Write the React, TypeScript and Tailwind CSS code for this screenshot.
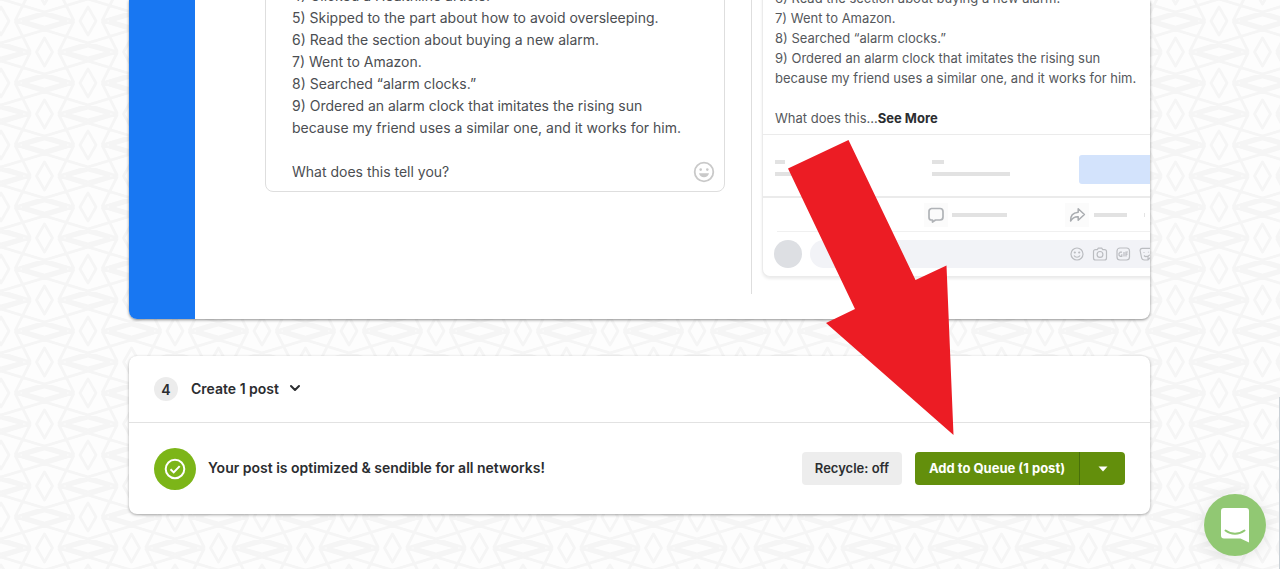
import { ChevronDown } from "lucide-react";

const POST_TEXT = [
  "4) Clicked a Healthline article.",
  "5) Skipped to the part about how to avoid oversleeping.",
  "6) Read the section about buying a new alarm.",
  "7) Went to Amazon.",
  "8) Searched “alarm clocks.”",
  "9) Ordered an alarm clock that imitates the rising sun",
  "because my friend uses a similar one, and it works for him.",
  "",
  "What does this tell you?",
].join("\n");

const PREVIEW_LINES = [
  "6) Read the section about buying a new alarm.",
  "7) Went to Amazon.",
  "8) Searched “alarm clocks.”",
  "9) Ordered an alarm clock that imitates the rising sun",
  "because my friend uses a similar one, and it works for him.",
];

// Lattice ornament: diamonds on a staggered 87 x 62 grid joined by long diagonals.
function latticePath() {
  const parts: string[] = [];
  for (let row = -2; row <= 4; row++) {
    for (let col = -2; col <= 3; col++) {
      const x = col * 87 + (row % 2 === 0 ? 0 : 43.5);
      const y = row * 31;
      parts.push(`M${x - 8} ${y}L${x} ${y - 14}L${x + 8} ${y}L${x} ${y + 14}Z`);
      const w = x + 43.5;
      parts.push(`M${w - 21} ${y}L${w} ${y - 6}L${w + 21} ${y}L${w} ${y + 6}Z`);
      for (const s of [-1, 1]) {
        for (const t of [-1, 1]) {
          parts.push(`M${x + s * 14} ${y}L${x + s * 29.5} ${y + t * 31}`);
          parts.push(`M${x + s * 14} ${y}L${x + s * 116.5} ${y + t * 31}`);
        }
      }
    }
  }
  return parts.join("");
}

function Backdrop() {
  return (
    <svg className="absolute inset-0 -z-10 size-full" aria-hidden="true">
      <defs>
        <pattern id="lattice" x="1" y="21" width="87" height="62" patternUnits="userSpaceOnUse">
          <path d={latticePath()} fill="none" stroke="#f5f5f5" strokeWidth="2.800" strokeLinejoin="round" />
        </pattern>
      </defs>
      <rect width="100%" height="100%" fill="#fdfdfd" />
      <rect width="100%" height="100%" fill="url(#lattice)" />
    </svg>
  );
}

function Smiley() {
  return (
    <svg viewBox="0 0 22 22" className="size-[22px]" fill="none" aria-hidden="true">
      <circle cx="11" cy="11" r="9.3" stroke="#c9c9c9" strokeWidth="1.8" />
      <circle cx="7.7" cy="8.6" r="1.3" fill="#c9c9c9" />
      <circle cx="14.3" cy="8.6" r="1.3" fill="#c9c9c9" />
      <path d="M6 12.3h10c-.6 2.5-2.6 4-5 4s-4.400-1.500-5-4z" fill="#c9c9c9" />
    </svg>
  );
}

function CommentTools() {
  return (
    <svg viewBox="0 0 90 16" className="h-4 w-[90px] shrink-0" fill="none" stroke="#bbbdc1" strokeWidth="1.2" aria-hidden="true">
      <circle cx="8" cy="8" r="6" />
      <circle cx="5.800" cy="6.500" r=".5" fill="#bbbdc1" />
      <circle cx="10.200" cy="6.500" r=".5" fill="#bbbdc1" />
      <path d="M5 9.500c1.300 2.300 4.700 2.300 6 0" />
      <path d="M26.500 3.600h1.800l1-1.400h3.400l1 1.400h1.800a2 2 0 0 1 2 2v6.400a2 2 0 0 1-2 2h-9a2 2 0 0 1-2-2V5.600a2 2 0 0 1 2-2z" />
      <circle cx="31" cy="8.400" r="2.900" />
      <rect x="48" y="2" width="12.500" height="12" rx="3" />
      <path d="M53 6.200h-1.800l-1.200 1.300v1.800l1.200 1h1.600V8.300M55 6v4.500M57 10.500V6h2M57 8.200h1.600" />
      <path d="M73 2.300h8a2.500 2.500 0 0 1 2.500 2.500v4.200l-4.500 5h-3.500a3 3 0 0 1-3-2.500L71.200 5a2.300 2.300 0 0 1 1.800-2.700zM83.500 9h-2.300a2.200 2.200 0 0 0-2.200 2.200V14M75 6v.8M79.500 5.800v.8M75 9.500c1 1.200 2.600 1.300 3.700.5" />
    </svg>
  );
}

function PostPreview() {
  return (
    <article className="ml-[10px] w-[480px] rounded-b-lg border border-t-0 border-[#ebebeb] bg-white shadow-[0_2px_3px_rgba(0,0,0,0.08)]">
      <div className="-mt-3 h-[146px] pl-3 text-[13px] leading-5 whitespace-nowrap text-[#55585c]">
        {PREVIEW_LINES.map((line) => (
          <p key={line}>{line}</p>
        ))}
        <p className="pt-5">
          What does this...
          <button type="button" className="font-bold text-[#2b2d30]">See More</button>
        </p>
      </div>
      <div className="flex h-[64px] border-y border-b-2 border-[#ebebeb] pl-3">
        <div className="w-[157px] space-y-2 pt-[25px]">
          <div className="h-1 w-[10px] bg-[#e2e2e2]" />
          <div className="h-1 w-[60px] bg-[#e2e2e2]" />
        </div>
        <div className="w-[147px] space-y-2 pt-[25px]">
          <div className="h-1 w-3 bg-[#e2e2e2]" />
          <div className="h-1 w-[78px] bg-[#e2e2e2]" />
        </div>
        <div className="mt-5 h-[29px] w-[110px] rounded-[3px] bg-[#d3e3fc]" />
      </div>
      <div className="ml-[14px] flex h-[34px] items-center border-b border-[#f0f0f0]">
        <div className="ml-[147px] flex w-[141px] items-center gap-1">
          <span className="grid size-6 place-items-center bg-[#fbfbfb]">
            <svg viewBox="0 0 18 18" className="size-[18px]" fill="none" stroke="#b0b3b7" strokeWidth="1.700" strokeLinejoin="round" aria-hidden="true">
              <path d="M4.500 2.500h8.500a3 3 0 0 1 3 3v5.500a3 3 0 0 1-3 3H8.500l-3 2v-2h-1a2.500 2.500 0 0 1-2.500-2.500v-6a3 3 0 0 1 2.500-3z" />
            </svg>
          </span>
          <span className="h-1 w-[55px] bg-[#e2e2e2]" />
        </div>
        <div className="flex items-center gap-[5px]">
          <span className="grid size-6 place-items-center bg-[#fbfbfb]">
            <svg viewBox="0 0 18 18" className="size-[18px]" fill="none" stroke="#a9acb0" strokeWidth="1.500" strokeLinejoin="round" aria-hidden="true">
              <path d="M10.200 2.800 16.400 8.500l-6.200 5.700v-3.400c-3.500-.2-5.600.8-7.600 4.200-.3-4.800 2.200-8.300 7.600-8.800z" />
            </svg>
          </span>
          <span className="h-1 w-[33px] bg-[#e2e2e2]" />
          <span className="ml-3 h-1 w-px bg-[#e4e4e4]" />
        </div>
      </div>
      <div className="flex h-[44px] items-center gap-2 pl-[11px]">
        <span className="size-7 rounded-full bg-[#dddfe3]" />
        <div className="flex h-7 w-[380px] items-center rounded-full bg-[#f2f3f7] pl-[259px]">
          <CommentTools />
        </div>
      </div>
    </article>
  );
}

function Editor() {
  return (
    <section className="flex overflow-hidden rounded-b-lg bg-white shadow-[0_1px_3px_rgba(0,0,0,0.45)]">
      <div className="w-[66px] shrink-0 bg-[#1877f2]" />
      <div className="mb-[25px] flex flex-1 border-r border-[#dedede] pr-[26px] pl-[70px]">
        <div className="-mt-4 flex flex-1 items-end self-start rounded-b-lg border border-[#dedede] pr-[9px] pb-2 pl-[26px]">
          <textarea
            aria-label="Post text"
            rows={9}
            defaultValue={POST_TEXT}
            className="block flex-1 resize-none overflow-hidden text-[14px] leading-[22px] whitespace-pre text-[#4b4e52] outline-none"
          />
          <button type="button" aria-label="Insert emoji">
            <Smiley />
          </button>
        </div>
      </div>
      <div className="h-[319px] w-[398px] shrink-0 overflow-hidden">
        <PostPreview />
      </div>
    </section>
  );
}

function CreatePanel() {
  return (
    <section className="mt-[37px] rounded-lg bg-white shadow-[0_1px_3px_rgba(0,0,0,0.35)]">
      <div className="flex h-[67px] items-center border-b border-[#e2e2e2] px-[25px]">
        <span className="grid size-6 place-items-center rounded-full bg-[#ececec] text-[14px] font-semibold text-[#2b2d30]">4</span>
        <button type="button" className="ml-[13px] flex items-center gap-2 pb-[2px] text-[14px] font-semibold text-[#2b2d30]">
          Create 1 post
          <ChevronDown className="size-4" strokeWidth={3} />
        </button>
      </div>
      <div className="flex h-[91px] items-center px-[25px]">
        <span className="grid size-[42px] place-items-center rounded-full bg-[#7cb518]">
          <svg viewBox="0 0 22 22" className="size-[22px]" fill="none" stroke="#fff" strokeWidth="2" aria-hidden="true">
            <circle cx="11" cy="11" r="9.300" />
            <path d="m6.500 11.300 3.200 3.100 6-6.300" />
          </svg>
        </span>
        <p className="ml-3 pb-[2px] text-[14px] font-semibold text-[#2b2d30]">Your post is optimized &amp; sendible for all networks!</p>
        <button type="button" className="ml-auto h-[33px] w-[100px] rounded-[4px] bg-[#ededed] text-[13px] font-semibold text-[#2b2d30]">
          Recycle: off
        </button>
        <div className="ml-[13px] flex h-[33px] w-[210px] overflow-hidden rounded-[4px] bg-[#638f0c] text-white">
          <button type="button" className="w-[165px] border-r border-[#48700a] text-[13px] font-bold whitespace-nowrap">
            Add to Queue (1 post)
          </button>
          <button type="button" aria-label="More queue options" className="grid flex-1 place-items-center">
            <svg viewBox="0 0 10 6" className="h-[6px] w-[10px]" aria-hidden="true">
              <path d="M.5.500h9L5 5.500z" fill="#fff" />
            </svg>
          </button>
        </div>
      </div>
    </section>
  );
}

export default function App() {
  return (
    <div className="relative isolate min-h-screen overflow-hidden pb-[54px] font-['Inter','Liberation_Sans',sans-serif]">
      <Backdrop />
      <main className="relative mx-auto w-full max-w-[1022px] pr-px">
        <Editor />
        <CreatePanel />
        <svg
          viewBox="0 0 168 297"
          className="pointer-events-none absolute top-[139px] right-[197px] h-[297px] w-[168px]"
          aria-hidden="true"
        >
          <path d="M62.500 1 129.500 141 160.500 126.500 167.500 296 40 184 69 170 2 29.500z" fill="#ec1c24" />
        </svg>
      </main>
      <button
        type="button"
        aria-label="Open chat"
        className="fixed right-[14px] bottom-[13px] grid size-[62px] place-items-center rounded-full bg-[#91c873] shadow-[0_2px_16px_rgba(0,0,0,0.1)]"
      >
        <svg viewBox="0 0 30 36" className="h-9 w-[30px]" aria-hidden="true">
          <path d="M4 1h22a3 3 0 0 1 3 3v31.500L20.500 31.500H4a3 3 0 0 1-3-3V4a3 3 0 0 1 3-3z" fill="#fff" />
          <path d="M5.500 23.500c5.500 4.300 13.500 4.300 19 0" fill="none" stroke="#91c873" strokeWidth="2" strokeLinecap="round" />
        </svg>
      </button>
      <div className="absolute right-0 bottom-0 h-[172px] w-px bg-[#c9d0d6]" />
    </div>
  );
}
